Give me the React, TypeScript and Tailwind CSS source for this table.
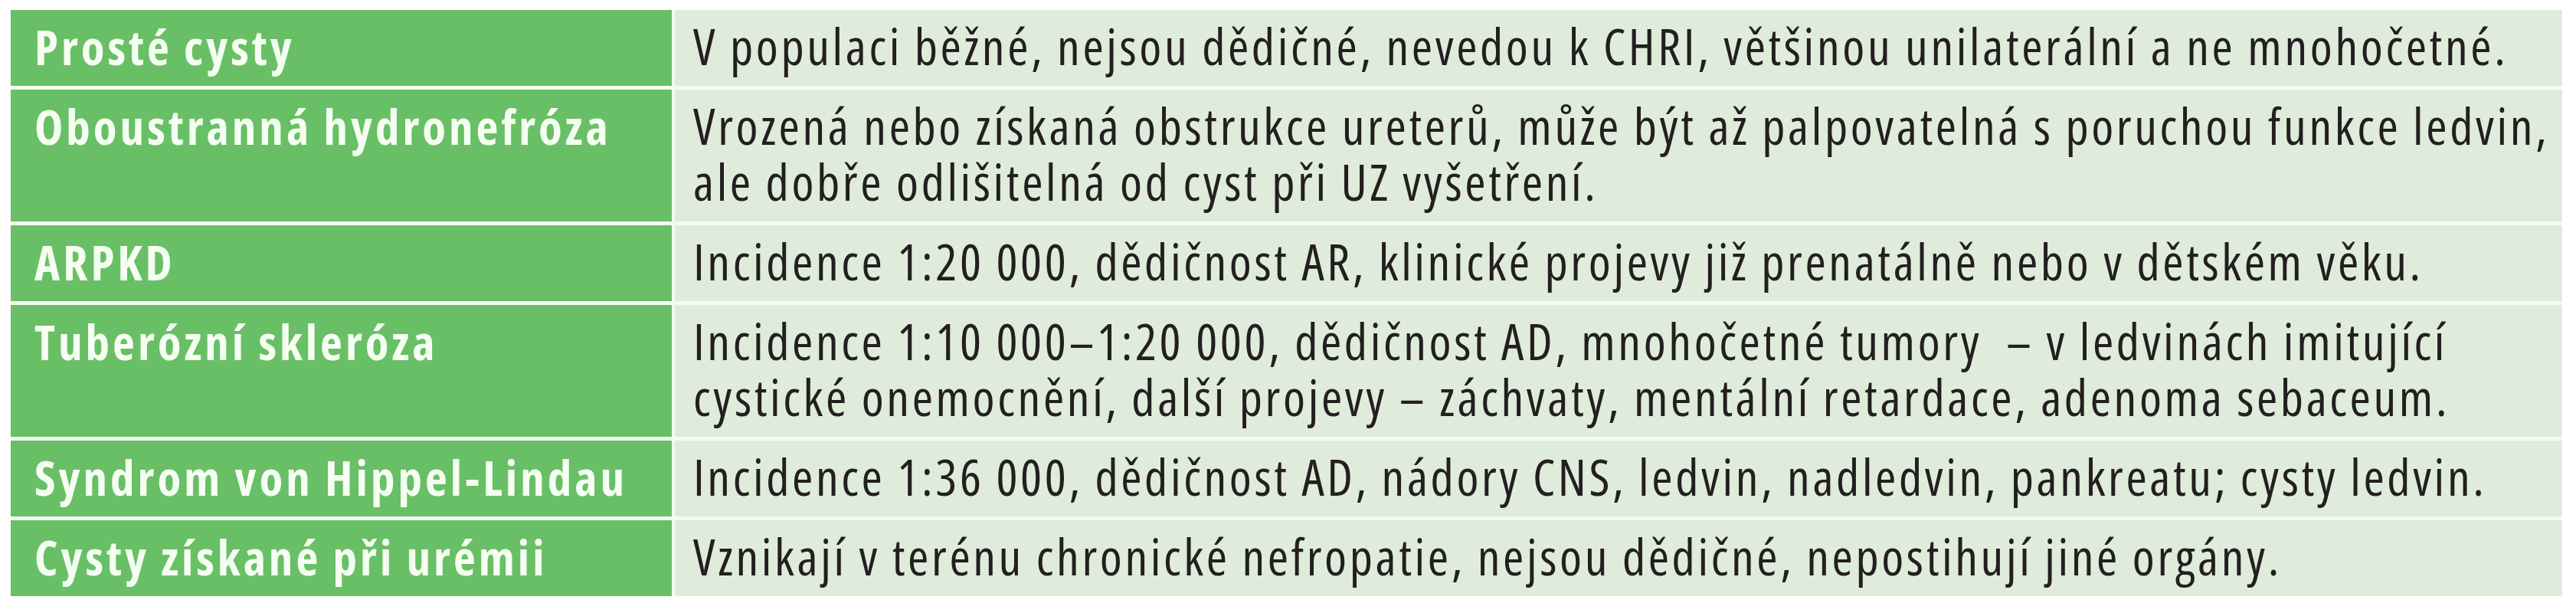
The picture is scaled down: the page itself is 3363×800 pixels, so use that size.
import React from "react";

const rows: { h: string; d: string[] }[] = [
  {
    h: "Prosté cysty",
    d: ["V populaci běžné, nejsou dědičné, nevedou k CHRI, většinou unilaterální a ne mnohočetné."],
  },
  {
    h: "Oboustranná hydronefróza",
    d: [
      "Vrozená nebo získaná obstrukce ureterů, může být až palpovatelná s poruchou funkce ledvin,",
      "ale dobře odlišitelná od cyst při UZ vyšetření.",
    ],
  },
  {
    h: "ARPKD",
    d: ["Incidence 1:20 000, dědičnost AR, klinické projevy již prenatálně nebo v dětském věku."],
  },
  {
    h: "Tuberózní skleróza",
    d: [
      "Incidence 1:10 000–1:20 000, dědičnost AD, mnohočetné tumory  – v ledvinách imitující",
      "cystické onemocnění, další projevy – záchvaty, mentální retardace, adenoma sebaceum.",
    ],
  },
  {
    h: "Syndrom von Hippel-Lindau",
    d: ["Incidence 1:36 000, dědičnost AD, nádory CNS, ledvin, nadledvin, pankreatu; cysty ledvin."],
  },
  {
    h: "Cysty získané při urémii",
    d: ["Vznikají v terénu chronické nefropatie, nejsou dědičné, nepostihují jiné orgány."],
  },
];

export default function App() {
  return (
    <div className="bg-white w-[3363px] h-[800px] pt-[13px] pl-[14px] font-['Open_Sans',sans-serif] font-stretch-condensed">
      <div className="grid grid-cols-[863px_2464px] gap-x-[4px] gap-y-[5px] w-[3331px] bg-[#f3fcf0]">
        {rows.map((r) => (
          <React.Fragment key={r.h}>
            <div className="bg-[#69bf66] pl-[31px] pt-[11px] pb-[15px] text-[#f4fff1] font-bold text-[63px] tracking-[4px] leading-[73px] whitespace-nowrap">
              {r.h}
            </div>
            <div className="bg-[#e0ecdb] pl-[24px] pt-[10px] pb-[16px] text-[#231f20] text-[66px] tracking-[3.6px] leading-[73px] whitespace-pre">
              {r.d.map((l, i) => (
                <div key={i}>{l}</div>
              ))}
            </div>
          </React.Fragment>
        ))}
      </div>
    </div>
  );
}
